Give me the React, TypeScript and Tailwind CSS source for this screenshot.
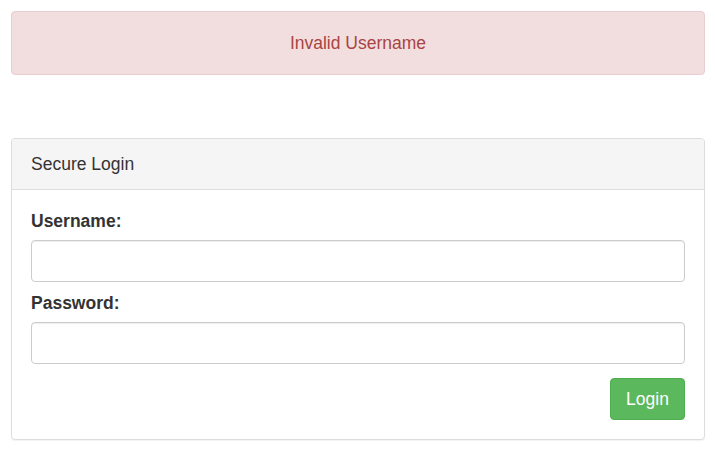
import React from "react";

export default function App() {
  return (
    <div className="min-h-[451px] w-full bg-white pl-[11px] pr-[10px] pt-[11px] text-[17.5px] text-[#333] [font-family:'Liberation_Sans',Arial,sans-serif]">
      <div className="flex h-[64px] items-center justify-center rounded-[4px] border border-[#ebccd1] bg-[#f2dede] text-[#a94442]">
        Invalid Username
      </div>
      <div className="mt-[63px] h-[302px] rounded-[4px] border border-[#ddd] bg-white shadow-[0_1px_1px_rgba(0,0,0,0.05)]">
        <div className="flex h-[51px] items-center rounded-t-[3px] border-b border-[#ddd] bg-[#f5f5f5] px-[19px] text-[#333]">
          Secure Login
        </div>
        <div className="px-[19px] pt-[19px]">
          <label className="block h-[24px] font-bold leading-[24px]">Username:</label>
          <input
            type="text"
            className="mt-[7px] block h-[42px] w-full rounded-[4px] border border-[#ccc] bg-white px-3 shadow-[inset_0_1px_1px_rgba(0,0,0,0.075)] outline-none"
          />
          <label className="mt-[9px] block h-[24px] font-bold leading-[24px]">Password:</label>
          <input
            type="password"
            className="mt-[7px] block h-[42px] w-full rounded-[4px] border border-[#ccc] bg-white px-3 shadow-[inset_0_1px_1px_rgba(0,0,0,0.075)] outline-none"
          />
          <div className="mt-[14px] flex justify-end">
            <button className="flex h-[42px] w-[75px] items-center justify-center rounded-[4px] border border-[#4cae4c] bg-[#5cb85c] text-white">
              Login
            </button>
          </div>
        </div>
      </div>
    </div>
  );
}
